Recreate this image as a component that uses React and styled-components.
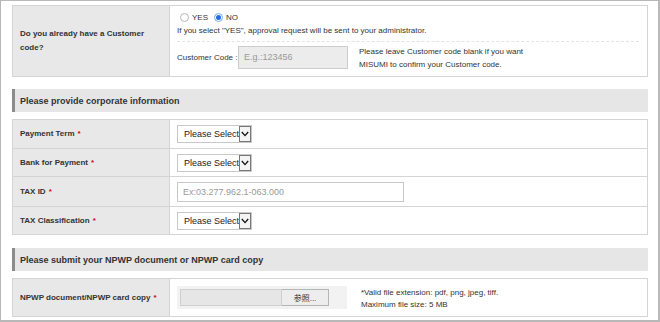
import styled, { createGlobalStyle } from 'styled-components'

const GlobalStyle = createGlobalStyle`
  html, body {
    margin: 0;
    padding: 0;
    background: #ffffff;
  }
  body {
    font-family: "Liberation Sans", Arial, sans-serif;
    color: #333333;
  }
  * {
    box-sizing: border-box;
  }
`

const Frame = styled.div`
  width: 660px;
  height: 322px;
  border: 1px solid #b8b8b8;
  border-right-width: 2px;
  border-bottom-width: 2px;
  padding: 4px 10px 0 11px;
  overflow: hidden;
`

const Table = styled.div`
  border: 1px solid #d4d4d4;
`

const Row = styled.div`
  display: grid;
  grid-template-columns: 157px 1fr;
  min-height: ${p => p.$h}px;
  & + & {
    border-top: 1px solid #d4d4d4;
  }
`

const Label = styled.div`
  background: #e8e8e8;
  border-right: 1px solid #d4d4d4;
  display: flex;
  align-items: center;
  padding: 0 7px;
  font-size: 8px;
  font-weight: bold;
  line-height: 14px;
  color: #333333;
`

const Req = styled.span`
  color: #d0021b;
  margin-left: 3px;
`

const Cell = styled.div`
  display: flex;
  align-items: center;
  padding: 0 7px;
  font-size: 8px;
  color: #333333;
  background: #ffffff;
`

const CodeCell = styled.div`
  display: flex;
  flex-direction: column;
  padding: 5px 7px 0 7px;
  font-size: 8px;
  color: #333333;
`

const RadioRow = styled.div`
  display: flex;
  align-items: center;
  height: 12px;
  gap: 6px;
  margin-left: 3px;
`

const RadioOpt = styled.label`
  display: flex;
  align-items: center;
  gap: 3px;
  font-size: 8px;
`

const Radio = styled.span`
  width: 9px;
  height: 9px;
  border-radius: 50%;
  border: 1px solid ${p => (p.$on ? '#7aa7e0' : '#b8b8b8')};
  background: #ffffff;
  display: flex;
  align-items: center;
  justify-content: center;
  &::after {
    content: '';
    width: 5px;
    height: 5px;
    border-radius: 50%;
    background: ${p => (p.$on ? '#1a6ee0' : 'transparent')};
  }
`

const Note = styled.div`
  line-height: 13px;
  margin-top: 1px;
  padding-bottom: 4px;
  border-bottom: 1px dashed #e4e4e4;
  margin-right: 1px;
`

const CodeRow = styled.div`
  display: flex;
  align-items: center;
  height: 28px;
  margin-top: 1px;
`

const CodeLabel = styled.span`
  width: 61px;
`

const CodeInput = styled.div`
  width: 110px;
  height: 23px;
  background: #ececec;
  border: 1px solid #cccccc;
  display: flex;
  align-items: center;
  padding-left: 5px;
  font-size: 9px;
  color: #999999;
`

const SideText = styled.div`
  margin-left: 11px;
  line-height: 13px;
  padding-top: 2px;
`

const SectionHead = styled.div`
  margin: ${p => p.$top}px 0 7px 0;
  height: 23px;
  background: #e6e6e6;
  border-left: 3px solid #8c8c8c;
  display: flex;
  align-items: center;
  padding-left: 5px;
  font-size: 9px;
  font-weight: bold;
  color: #333333;
`

const SelectBox = styled.div`
  width: 75px;
  height: 18px;
  border: 1px solid #c8c8c8;
  display: flex;
  align-items: stretch;
  background: #ffffff;
  font-size: 9px;
  color: #222222;
`

const SelectText = styled.span`
  flex: 1;
  display: flex;
  align-items: center;
  padding-left: 6px;
  white-space: nowrap;
  overflow: hidden;
`

const SelectArrow = styled.span`
  width: 12px;
  border: 1px solid #777777;
  background: #f4f4f4;
  display: flex;
  align-items: center;
  justify-content: center;
`

const TextInput = styled.div`
  width: 227px;
  height: 20px;
  border: 1px solid #c8c8c8;
  display: flex;
  align-items: center;
  padding-left: 5px;
  font-size: 9px;
  color: #999999;
`

const FileBox = styled.div`
  display: flex;
  align-items: center;
  background: #f2f2f2;
  padding: 3px;
  width: 170px;
`

const FileField = styled.div`
  width: 102px;
  height: 17px;
  background: #e6e6e6;
  border: 1px solid #cfcfcf;
`

const FileButton = styled.div`
  width: 47px;
  height: 17px;
  border: 1px solid #b5b5b5;
  border-left: none;
  background: #ededed;
  display: flex;
  align-items: center;
  justify-content: center;
  font-size: 8px;
  font-family: "Liberation Sans", "Noto Sans CJK JP", sans-serif;
  color: #333333;
`

const FileNote = styled.div`
  margin-left: 14px;
  line-height: 12px;
  padding-top: 2px;
`

function Select() {
  return (
    <SelectBox>
      <SelectText>Please Select</SelectText>
      <SelectArrow>
        <svg width="8" height="6" viewBox="0 0 8 6">
          <path d="M0.8 1 L4 4.6 L7.2 1" fill="none" stroke="#111" strokeWidth="1.3" />
        </svg>
      </SelectArrow>
    </SelectBox>
  )
}

export default function App() {
  return (
    <Frame>
      <GlobalStyle />
      <Table>
        <Row $h={70}>
          <Label>Do you already have a Customer<br />code?</Label>
          <CodeCell>
            <RadioRow>
              <RadioOpt><Radio />YES</RadioOpt>
              <RadioOpt><Radio $on />NO</RadioOpt>
            </RadioRow>
            <Note>If you select "YES", approval request will be sent to your administrator.</Note>
            <CodeRow>
              <CodeLabel>Customer Code :</CodeLabel>
              <CodeInput>E.g.:123456</CodeInput>
              <SideText>
                Please leave Customer code blank if you want<br />
                MISUMI to confirm your Customer code.
              </SideText>
            </CodeRow>
          </CodeCell>
        </Row>
      </Table>

      <SectionHead $top={12}>Please provide corporate information</SectionHead>
      <Table>
        <Row $h={28}>
          <Label>Payment Term<Req>*</Req></Label>
          <Cell><Select /></Cell>
        </Row>
        <Row $h={28}>
          <Label>Bank for Payment<Req>*</Req></Label>
          <Cell><Select /></Cell>
        </Row>
        <Row $h={30}>
          <Label>TAX ID<Req>*</Req></Label>
          <Cell><TextInput>Ex:03.277.962.1-063.000</TextInput></Cell>
        </Row>
        <Row $h={28}>
          <Label>TAX Classification<Req>*</Req></Label>
          <Cell><Select /></Cell>
        </Row>
      </Table>

      <SectionHead $top={13}>Please submit your NPWP document or NPWP card copy</SectionHead>
      <Table>
        <Row $h={37}>
          <Label>NPWP document/NPWP card copy<Req>*</Req></Label>
          <Cell>
            <FileBox>
              <FileField />
              <FileButton>参照...</FileButton>
            </FileBox>
            <FileNote>
              *Valid file extension: pdf, png, jpeg, tiff.<br />
              Maximum file size: 5 MB
            </FileNote>
          </Cell>
        </Row>
      </Table>
    </Frame>
  )
}
